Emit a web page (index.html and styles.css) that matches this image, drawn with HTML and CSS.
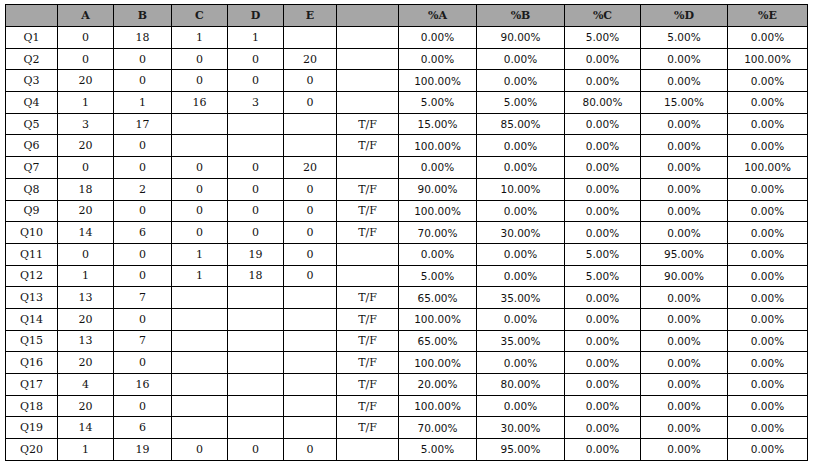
FILE: index.html
```html
<!DOCTYPE html>
<html>
<head>
<meta charset="utf-8">
<link rel="stylesheet" href="styles.css">
</head>
<body>
<div class="wrap">
<table class="grid">
<colgroup>
<col class="c-q"><col class="c-a"><col class="c-b"><col class="c-c"><col class="c-d"><col class="c-e"><col class="c-tf">
<col class="c-pa"><col class="c-pb"><col class="c-pc"><col class="c-pd"><col class="c-pe">
</colgroup>
<thead>
<tr><th></th><th>A</th><th>B</th><th>C</th><th>D</th><th>E</th><th></th><th>%A</th><th>%B</th><th>%C</th><th>%D</th><th>%E</th></tr>
</thead>
<tbody id="rows">
<tr><td>Q1</td><td>0</td><td>18</td><td>1</td><td>1</td><td></td><td></td><td class="p">0.00%</td><td class="p">90.00%</td><td class="p">5.00%</td><td class="p">5.00%</td><td class="p">0.00%</td></tr>
<tr><td>Q2</td><td>0</td><td>0</td><td>0</td><td>0</td><td>20</td><td></td><td class="p">0.00%</td><td class="p">0.00%</td><td class="p">0.00%</td><td class="p">0.00%</td><td class="p">100.00%</td></tr>
<tr><td>Q3</td><td>20</td><td>0</td><td>0</td><td>0</td><td>0</td><td></td><td class="p">100.00%</td><td class="p">0.00%</td><td class="p">0.00%</td><td class="p">0.00%</td><td class="p">0.00%</td></tr>
<tr><td>Q4</td><td>1</td><td>1</td><td>16</td><td>3</td><td>0</td><td></td><td class="p">5.00%</td><td class="p">5.00%</td><td class="p">80.00%</td><td class="p">15.00%</td><td class="p">0.00%</td></tr>
<tr><td>Q5</td><td>3</td><td>17</td><td></td><td></td><td></td><td>T/F</td><td class="p">15.00%</td><td class="p">85.00%</td><td class="p">0.00%</td><td class="p">0.00%</td><td class="p">0.00%</td></tr>
<tr><td>Q6</td><td>20</td><td>0</td><td></td><td></td><td></td><td>T/F</td><td class="p">100.00%</td><td class="p">0.00%</td><td class="p">0.00%</td><td class="p">0.00%</td><td class="p">0.00%</td></tr>
<tr><td>Q7</td><td>0</td><td>0</td><td>0</td><td>0</td><td>20</td><td></td><td class="p">0.00%</td><td class="p">0.00%</td><td class="p">0.00%</td><td class="p">0.00%</td><td class="p">100.00%</td></tr>
<tr><td>Q8</td><td>18</td><td>2</td><td>0</td><td>0</td><td>0</td><td>T/F</td><td class="p">90.00%</td><td class="p">10.00%</td><td class="p">0.00%</td><td class="p">0.00%</td><td class="p">0.00%</td></tr>
<tr><td>Q9</td><td>20</td><td>0</td><td>0</td><td>0</td><td>0</td><td>T/F</td><td class="p">100.00%</td><td class="p">0.00%</td><td class="p">0.00%</td><td class="p">0.00%</td><td class="p">0.00%</td></tr>
<tr><td>Q10</td><td>14</td><td>6</td><td>0</td><td>0</td><td>0</td><td>T/F</td><td class="p">70.00%</td><td class="p">30.00%</td><td class="p">0.00%</td><td class="p">0.00%</td><td class="p">0.00%</td></tr>
<tr><td>Q11</td><td>0</td><td>0</td><td>1</td><td>19</td><td>0</td><td></td><td class="p">0.00%</td><td class="p">0.00%</td><td class="p">5.00%</td><td class="p">95.00%</td><td class="p">0.00%</td></tr>
<tr><td>Q12</td><td>1</td><td>0</td><td>1</td><td>18</td><td>0</td><td></td><td class="p">5.00%</td><td class="p">0.00%</td><td class="p">5.00%</td><td class="p">90.00%</td><td class="p">0.00%</td></tr>
<tr><td>Q13</td><td>13</td><td>7</td><td></td><td></td><td></td><td>T/F</td><td class="p">65.00%</td><td class="p">35.00%</td><td class="p">0.00%</td><td class="p">0.00%</td><td class="p">0.00%</td></tr>
<tr><td>Q14</td><td>20</td><td>0</td><td></td><td></td><td></td><td>T/F</td><td class="p">100.00%</td><td class="p">0.00%</td><td class="p">0.00%</td><td class="p">0.00%</td><td class="p">0.00%</td></tr>
<tr><td>Q15</td><td>13</td><td>7</td><td></td><td></td><td></td><td>T/F</td><td class="p">65.00%</td><td class="p">35.00%</td><td class="p">0.00%</td><td class="p">0.00%</td><td class="p">0.00%</td></tr>
<tr><td>Q16</td><td>20</td><td>0</td><td></td><td></td><td></td><td>T/F</td><td class="p">100.00%</td><td class="p">0.00%</td><td class="p">0.00%</td><td class="p">0.00%</td><td class="p">0.00%</td></tr>
<tr><td>Q17</td><td>4</td><td>16</td><td></td><td></td><td></td><td>T/F</td><td class="p">20.00%</td><td class="p">80.00%</td><td class="p">0.00%</td><td class="p">0.00%</td><td class="p">0.00%</td></tr>
<tr><td>Q18</td><td>20</td><td>0</td><td></td><td></td><td></td><td>T/F</td><td class="p">100.00%</td><td class="p">0.00%</td><td class="p">0.00%</td><td class="p">0.00%</td><td class="p">0.00%</td></tr>
<tr><td>Q19</td><td>14</td><td>6</td><td></td><td></td><td></td><td>T/F</td><td class="p">70.00%</td><td class="p">30.00%</td><td class="p">0.00%</td><td class="p">0.00%</td><td class="p">0.00%</td></tr>
<tr><td>Q20</td><td>1</td><td>19</td><td>0</td><td>0</td><td>0</td><td></td><td class="p">5.00%</td><td class="p">95.00%</td><td class="p">0.00%</td><td class="p">0.00%</td><td class="p">0.00%</td></tr>
</tbody>
</table>
</div>
</body>
</html>
```

FILE: styles.css
```css
html, body {
  margin: 0;
  padding: 0;
  background: #ffffff;
}

.wrap {
  padding: 4px 0 0 5px;
}

.grid {
  border-collapse: collapse;
  table-layout: fixed;
  width: 803px;
  font-family: "DejaVu Serif", "Liberation Serif", serif;
  font-size: 11px;
  color: #111111;
}

.c-q { width: 52px; }
.c-a { width: 56px; }
.c-b { width: 58px; }
.c-c { width: 56px; }
.c-d { width: 56px; }
.c-e { width: 53px; }
.c-tf { width: 62px; }
.c-pa { width: 78px; }
.c-pb { width: 88px; }
.c-pc { width: 76px; }
.c-pd { width: 87px; }
.c-pe { width: 80px; }

.grid th,
.grid td {
  border: 1px solid #000000;
  padding: 0;
  text-align: center;
  vertical-align: middle;
  white-space: nowrap;
}

.grid thead tr {
  height: 22px;
}

.grid th {
  background: #a6a6a6;
  font-weight: bold;
  font-size: 11px;
  color: #1a1a1a;
}

.grid tbody tr {
  height: 21.7px;
}

.grid td.p {
  font-family: "DejaVu Sans", "Liberation Sans", sans-serif;
  font-size: 10.5px;
}
```
